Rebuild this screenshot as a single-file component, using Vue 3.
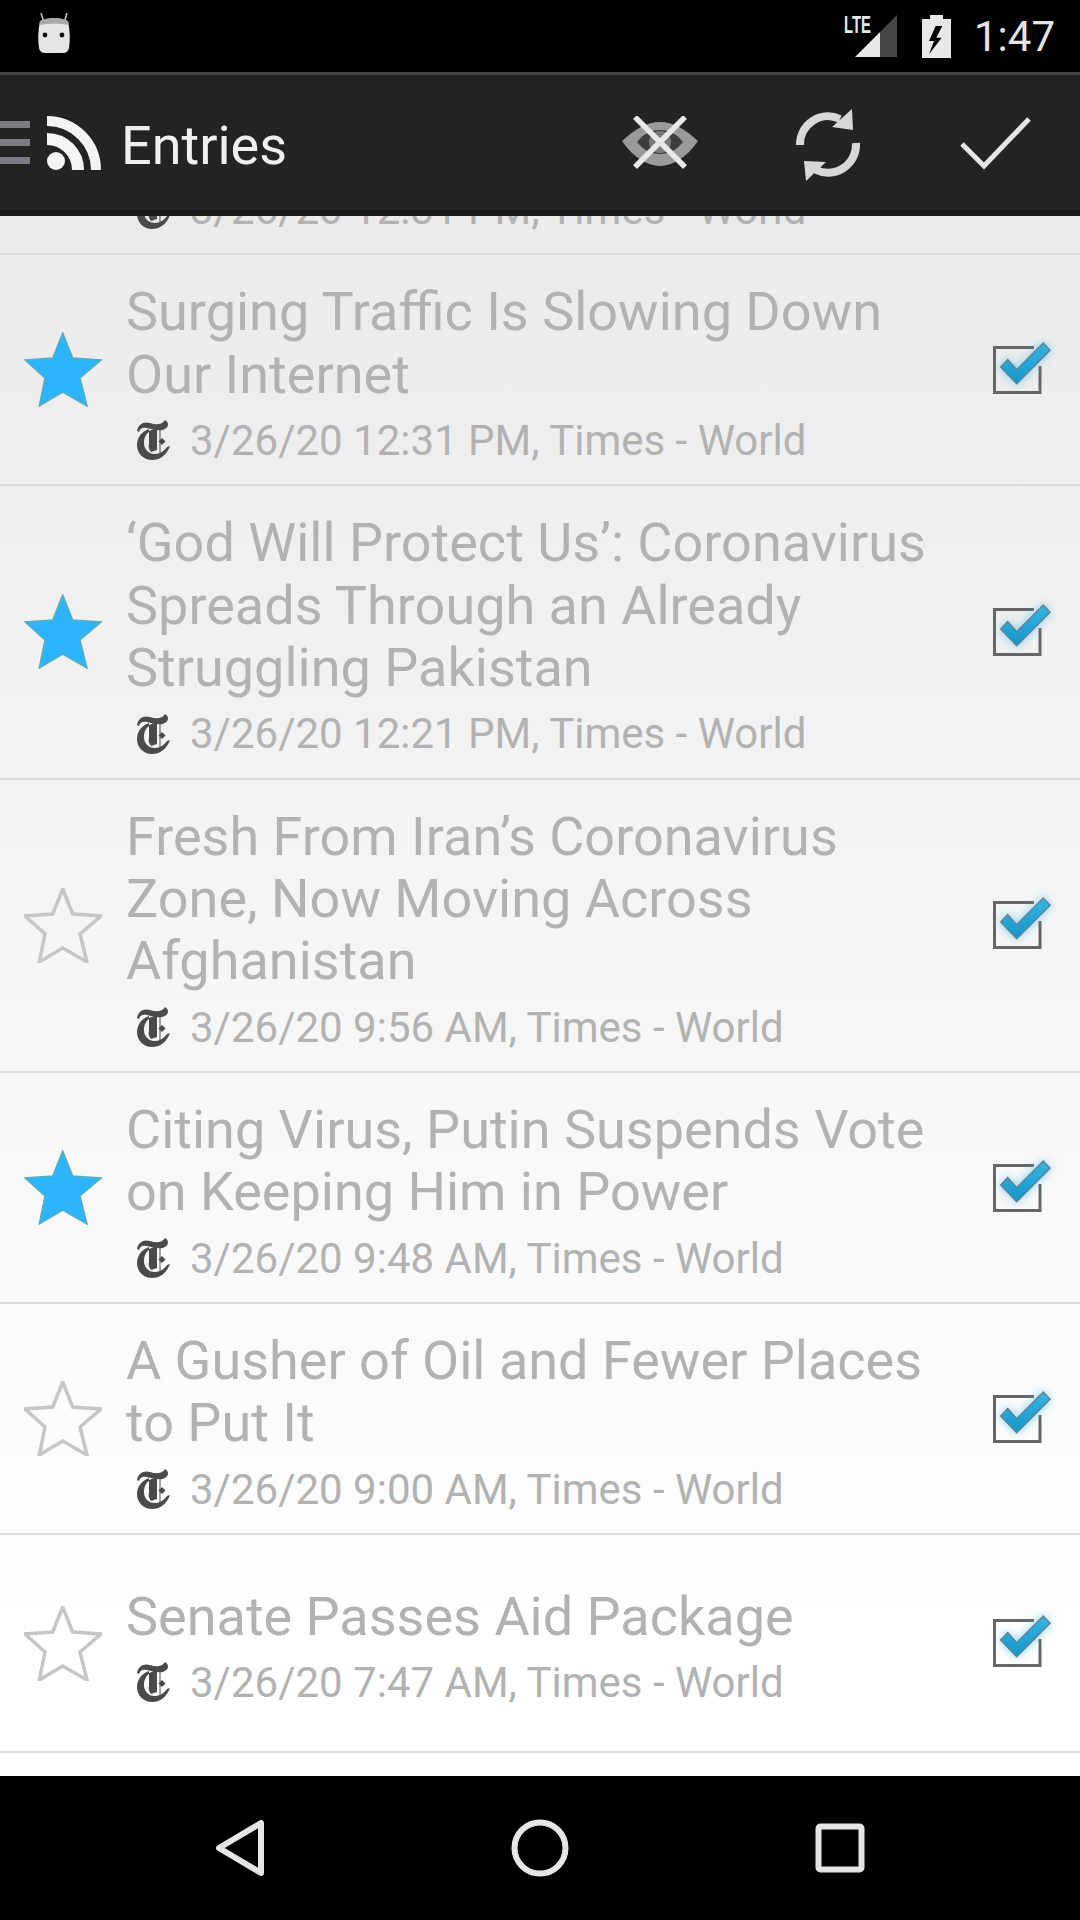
<template>
  <div class="screen">
    <div class="status-bar">
      <svg class="android" width="36" height="42" viewBox="0 0 36 42">
        <path d="M8 11 L5 1 M28 11 L31 1" stroke="#bbb" stroke-width="1.6" />
        <path d="M4 9 Q18 3 32 9 Q35 24 33 36 Q32 41 27 41 H9 Q4 41 3 36 Q1 24 4 9 Z" fill="#e6e6e6" />
        <path d="M4 9 Q18 3 32 9 L32.5 13 Q18 10 3.5 13 Z" fill="#a8a8a8" />
        <circle cx="9" cy="23" r="2.4" fill="#111" />
        <circle cx="26" cy="23" r="2.4" fill="#111" />
      </svg>
      <div class="status-right">
        <svg width="53" height="44" viewBox="0 0 53 44">
          <text x="0" y="19" class="lte" textLength="27" lengthAdjust="spacingAndGlyphs">LTE</text>
          <polygon points="53,1 53,43 36,43 36,18" fill="#444" />
          <polygon points="11,43 36,43 36,18" fill="#e8e8e8" />
        </svg>
        <svg class="battery" width="29" height="43" viewBox="0 0 29 43">
          <path d="M8 0 H21 V4 H29 V43 H0 V4 H8 Z" fill="#e8e8e8" />
          <polygon points="13.7,11 7,26 12,26 7,39.3 19.7,22.7 14.3,22.7 20.3,11" fill="#000" />
        </svg>
        <span class="clock">1:47</span>
      </div>
    </div>

    <div class="action-bar">
      <div class="drawer"><i></i><i></i><i></i></div>
      <svg class="rss" width="54" height="54" viewBox="0 0 54 54">
        <path d="M0 5 A49 49 0 0 1 49 54" fill="none" stroke="#f4f4f4" stroke-width="10" />
        <path d="M0 23 A31 31 0 0 1 31 54" fill="none" stroke="#f4f4f4" stroke-width="12" />
        <circle cx="9" cy="45" r="9" fill="#f4f4f4" />
      </svg>
      <h1 class="screen-title">Entries</h1>
      <div class="action">
        <svg width="78" height="54" viewBox="0 0 78 54">
          <path d="M1 25 C14 13 26 6 39 6 C52 6 64 13 77 25 C66 41 52 50 39 50 C26 50 12 41 1 25 Z" fill="#9a9a9a" />
          <path d="M16 26 C23 17 31 14 39 14 C47 14 55 17 62 26 C55 35 47 38 39 38 C31 38 23 35 16 26 Z" fill="#3c3c3c" />
          <circle cx="39" cy="26" r="11" fill="#7a7a7a" />
          <path d="M14 1 L64 51 M64 1 L14 51" stroke="#e8e8e8" stroke-width="5.5" />
        </svg>
      </div>
      <div class="action sync">
        <svg width="72" height="76" viewBox="0 0 72 76">
          <path d="M8 38 A28 28 0 0 1 48 12" fill="none" stroke="#d8d8d8" stroke-width="8" />
          <polygon points="60,2 61,23 40,20" fill="#d8d8d8" />
          <path d="M64 36 A28 28 0 0 1 24 63" fill="none" stroke="#d8d8d8" stroke-width="8" />
          <polygon points="14,74 12,54 34,55" fill="#d8d8d8" />
        </svg>
      </div>
      <div class="action">
        <svg width="76" height="60" viewBox="0 0 76 60">
          <path d="M4 31 L26 53 L71 6" fill="none" stroke="#e6e6e6" stroke-width="5" />
        </svg>
      </div>
    </div>

    <div class="list">
      <div v-for="(entry, i) in entries" :key="i" class="row">
        <svg class="star" width="78" height="75" viewBox="0 0 78 75">
          <polygon
            points="38.7,1 48.7,26 77,28 56,46 63,74 38.7,60 15.3,74 21,46 1,28 28.7,26"
            :class="entry.starred ? 'star-on' : 'star-off'"
          />
        </svg>
        <div class="entry-body">
          <div class="entry-title">{{ entry.title }}</div>
          <div class="entry-meta">
            <svg class="nyt" width="34" height="40" viewBox="0 0 34 40">
              <path d="M1 11 C2 4 8 1 14 3 C20 5 26 5 29 0 C33 2 33 7 29 9 C24 12 16 9 11 8 C7 7 4 8 3 12 Z" />
              <path d="M13 9 C5 12 1 18 1 25 C1 33 7 40 16 40 C25 40 31 34 34 26 L31 27 C28 31 24 34 19 34 C12 34 8 29 8 23 C8 18 10 14 13 12 Z" />
              <path d="M13 11 L21 8 V30 L15 32 C13 29 12 27 13 24 Z" />
              <path d="M23.5 8 H24.5 V37 H23.5 Z" />
              <path d="M26 18 L29.5 21.5 L26 25 L22.5 21.5 Z" />
            </svg>
            <span>{{ entry.meta }}</span>
          </div>
        </div>
        <svg class="check" width="75" height="76" viewBox="0 0 75 76">
          <defs>
            <linearGradient :id="'blue' + i" x1="0" y1="0" x2="0" y2="1">
              <stop offset="0" stop-color="#38b6e4" />
              <stop offset="1" stop-color="#1396cc" />
            </linearGradient>
          </defs>
          <path d="M49 15.5 H9.5 V60.5 H55 V34" fill="none" stroke="#666" stroke-width="3" />
          <polygon
            class="tick"
            points="15.7,35 22.7,27.7 31.7,37.7 58.3,11 65,18.3 31.7,51.7"
            :fill="'url(#blue' + i + ')'"
          />
        </svg>
      </div>
    </div>

    <div class="nav-bar">
      <div class="nav-btn">
        <svg width="52" height="60" viewBox="0 0 52 60">
          <path d="M47 5 V55 L5 30 Z" fill="none" stroke="#e6e6e6" stroke-width="6" stroke-linejoin="round" />
        </svg>
      </div>
      <div class="nav-btn">
        <svg width="58" height="58" viewBox="0 0 58 58">
          <circle cx="29" cy="29" r="25.5" fill="none" stroke="#e6e6e6" stroke-width="6" />
        </svg>
      </div>
      <div class="nav-btn">
        <svg width="50" height="50" viewBox="0 0 50 50">
          <rect x="3.5" y="3.5" width="43" height="43" rx="2" fill="none" stroke="#e6e6e6" stroke-width="6" />
        </svg>
      </div>
    </div>
  </div>
</template>

<script setup>
const entries = [
  { title: "", meta: "3/26/20 12:31 PM, Times - World", starred: false },
  { title: "Surging Traffic Is Slowing Down Our Internet", meta: "3/26/20 12:31 PM, Times - World", starred: true },
  { title: "‘God Will Protect Us’: Coronavirus Spreads Through an Already Struggling Pakistan", meta: "3/26/20 12:21 PM, Times - World", starred: true },
  { title: "Fresh From Iran’s Coronavirus Zone, Now Moving Across Afghanistan", meta: "3/26/20 9:56 AM, Times - World", starred: false },
  { title: "Citing Virus, Putin Suspends Vote on Keeping Him in Power", meta: "3/26/20 9:48 AM, Times - World", starred: true },
  { title: "A Gusher of Oil and Fewer Places to Put It", meta: "3/26/20 9:00 AM, Times - World", starred: false },
  { title: "Senate Passes Aid Package", meta: "3/26/20 7:47 AM, Times - World", starred: false }
];
</script>

<style scoped>
.screen {
  width: 1080px;
  height: 1920px;
  display: flex;
  flex-direction: column;
  overflow: hidden;
  font-family: Roboto, "Liberation Sans", sans-serif;
  background: #000;
}

/* Status bar */
.status-bar {
  height: 72px;
  flex: none;
  display: flex;
  align-items: center;
  justify-content: space-between;
  padding: 0 25px 0 36px;
  background: #000;
}

.android {
  margin-top: -6px;
}

.status-right {
  display: flex;
  align-items: center;
}

.lte {
  font-family: "Liberation Sans", sans-serif;
  font-size: 23px;
  font-weight: bold;
  fill: #e8e8e8;
}

.battery {
  margin-left: 25px;
}

.clock {
  margin-left: 23px;
  font-size: 42px;
  color: #e4e4e4;
}

/* Action bar */
.action-bar {
  height: 144px;
  flex: none;
  box-sizing: border-box;
  display: flex;
  align-items: center;
  background: #232323;
  border-top: 3px solid #444;
  border-bottom: 6px solid #1a1a1a;
  position: relative;
  z-index: 1;
}

.drawer {
  width: 30px;
  display: flex;
  flex-direction: column;
  gap: 11px;
}

.drawer i {
  display: block;
  height: 7px;
  background: #7c7c82;
}

.rss {
  margin-left: 17px;
}

.screen-title {
  flex: 1;
  margin: 6px 0 0 20px;
  font-size: 54px;
  font-weight: 400;
  color: #f0f0f0;
}

.action {
  width: 168px;
  display: flex;
  justify-content: center;
}

.sync {
  margin-top: 4px;
}

/* Entries */
.list {
  flex: 1;
  min-height: 0;
  display: flex;
  flex-direction: column;
  justify-content: flex-end;
  overflow: hidden;
  padding-bottom: 23px;
  background: linear-gradient(#ebebeb, #ffffff 92%);
}

.row {
  flex: none;
  box-sizing: border-box;
  min-height: 218px;
  display: flex;
  align-items: center;
  padding-left: 24px;
  border-bottom: 2px solid #dcdcdc;
}

.star {
  flex: none;
}

.star-on {
  fill: #2cb5fd;
  stroke: #58aebd;
  stroke-width: 1.5;
}

.star-off {
  fill: none;
  stroke: #c6c6c6;
  stroke-width: 3.5;
}

.entry-body {
  flex: 1;
  min-width: 0;
  margin: 0 25px 0 24px;
  padding: 26px 0 18px;
}

.entry-title {
  font-size: 54px;
  line-height: 62.4px;
  color: #b2b2b2;
}

.entry-title:empty {
  height: 124.8px;
}

.entry-meta {
  display: flex;
  align-items: center;
  height: 52px;
  margin-top: 8.2px;
  padding-left: 10px;
  font-size: 42px;
  color: #b2b2b2;
}

.nyt {
  flex: none;
  margin-right: 20px;
  fill: #4a4a4a;
}

.check {
  flex: none;
  margin-right: 20px;
}

.tick {
  stroke: #5d8496;
  stroke-width: 1.5;
  filter: drop-shadow(0 0 5px rgba(70, 185, 235, 0.65));
}

/* Navigation bar */
.nav-bar {
  height: 144px;
  flex: none;
  display: flex;
  justify-content: center;
  background: #000;
}

.nav-btn {
  width: 300px;
  display: flex;
  align-items: center;
  justify-content: center;
}
</style>
